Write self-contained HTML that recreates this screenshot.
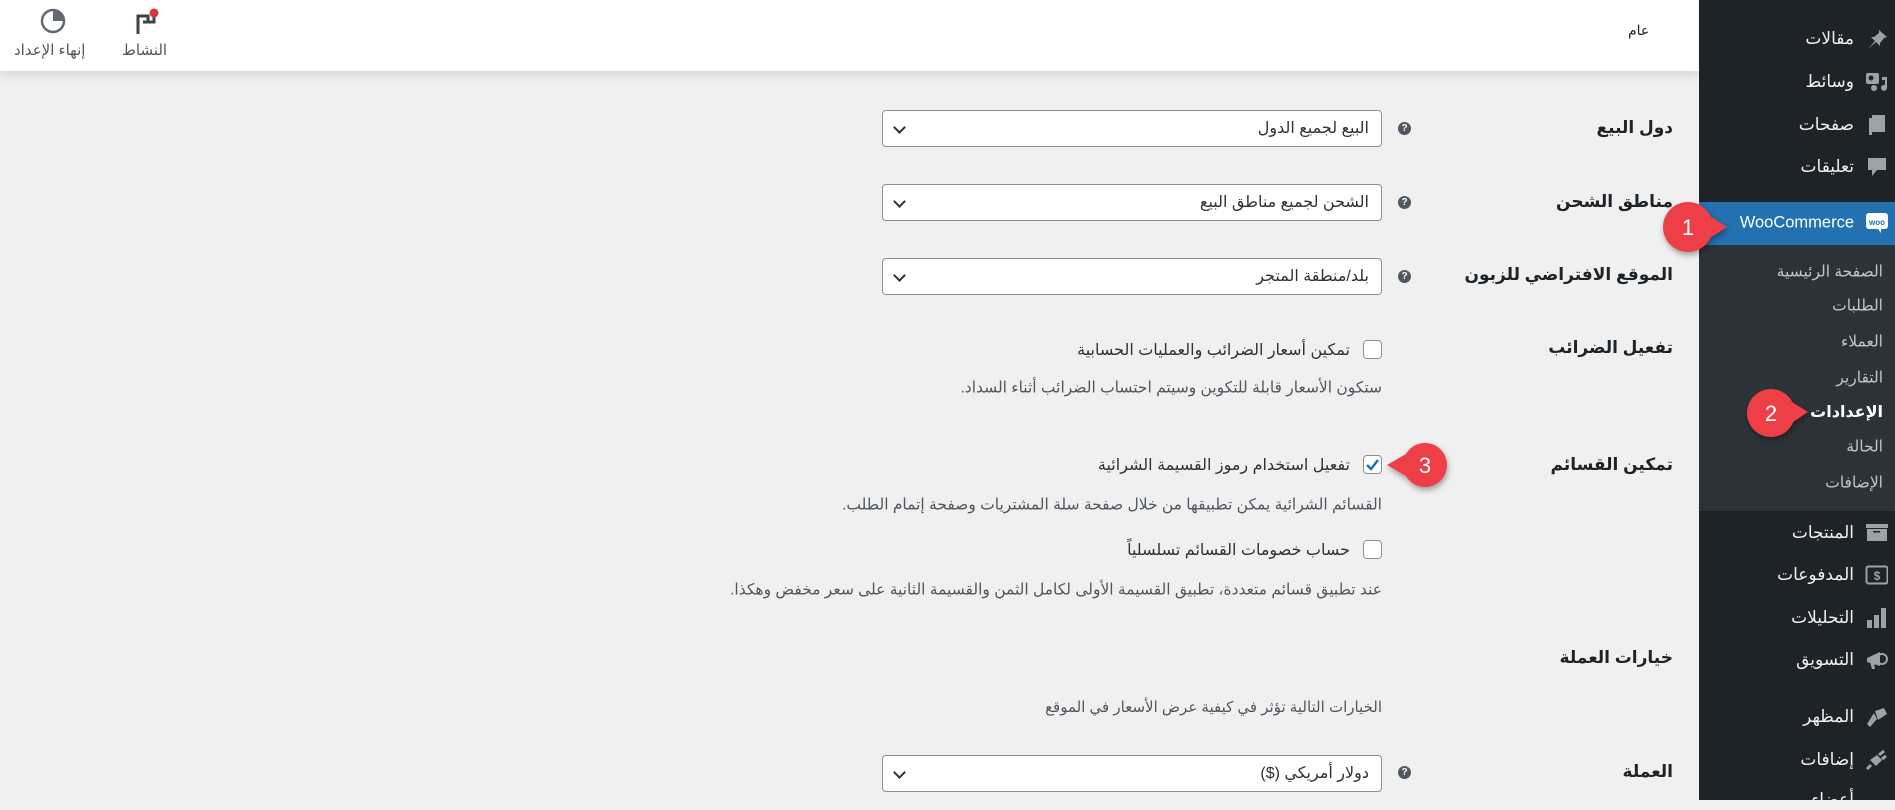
<!DOCTYPE html>
<html><head><meta charset="utf-8"><style>
*{margin:0;padding:0;box-sizing:border-box}
body{width:1895px;height:800px;overflow:hidden;background:#f0f0f1;font-family:"Liberation Sans","Noto Sans CJK SC","DejaVu Sans",sans-serif;position:relative;direction:rtl}
.a{position:absolute;white-space:nowrap}
#top{position:absolute;left:0;top:0;width:1699px;height:71px;background:#fff;box-shadow:0 4px 10px rgba(0,0,0,.12)}
#side{position:absolute;left:1699px;top:0;width:196px;height:800px;background:#1d2327}
#sub{position:absolute;left:1699px;top:245px;width:196px;height:266px;background:#2c3338}
#woo{position:absolute;left:1699px;top:202px;width:196px;height:43px;background:#2271b1}
.m{color:#f0f0f1;font-size:17px;right:41px;transform:translateY(-50%)}
.s{color:#c3c4c7;font-size:15.5px;right:12px;transform:translateY(-50%)}
.ic{position:absolute;left:1865px;width:23px;height:20px;transform:translateY(-50%)}
.lbl{right:222px;font-size:17px;font-weight:bold;color:#1d2327;transform:translateY(-50%)}
.sel{position:absolute;left:882px;width:500px;height:37px;background:#fff;border:1px solid #8c8f94;border-radius:4px;font-size:16px;color:#2c3338;padding-right:12px;line-height:35px}
.sel:after{content:"";position:absolute;left:12px;top:12px;width:7px;height:7px;border-right:2px solid #2c3338;border-bottom:2px solid #2c3338;transform:rotate(45deg)}
.help{position:absolute;left:1398px;width:13px;height:13px;border-radius:50%;background:#50575e;color:#fff;font-size:10px;text-align:center;line-height:13px;font-weight:bold;direction:ltr}
.cb{position:absolute;left:1363px;width:19px;height:19px;border:1px solid #8c8f94;border-radius:4px;background:#fff}
.t{font-size:16px;color:#2c3338;transform:translateY(-50%)}
.d{font-size:15.5px;color:#50575e;right:513px;transform:translateY(-50%)}
</style></head><body>
<div id="top"></div>
<div class="a" style="left:1628px;top:22px;font-size:14px;color:#1d2327">عام</div>
<svg class="a" style="left:135px;top:8px" width="26" height="28" viewBox="0 0 26 28"><path d="M3 26V8h10v6h-5" fill="none" stroke="#3c434a" stroke-width="3"/><path d="M13 8v6h6V6" fill="none" stroke="#3c434a" stroke-width="3"/><circle cx="19" cy="5" r="4.5" fill="#d63638"/></svg>
<div class="a" style="left:122px;top:41px;font-size:15px;color:#50575e">النشاط</div>
<svg class="a" style="left:40px;top:8px" width="26" height="26" viewBox="0 0 26 26"><circle cx="13" cy="13" r="11" fill="none" stroke="#646970" stroke-width="2.5"/><path d="M13 3A10 10 0 0 1 23 13H13Z" fill="#646970"/></svg>
<div class="a" style="left:14px;top:41px;font-size:15px;color:#50575e">إنهاء الإعداد</div>

<div id="side"></div><div id="sub"></div><div id="woo"></div>
<div class="a m" style="top:39px">مقالات</div>
<div class="a m" style="top:82px">وسائط</div>
<div class="a m" style="top:125px">صفحات</div>
<div class="a m" style="top:167px">تعليقات</div>
<div class="a m" style="top:223px;color:#fff;font-size:16.5px">WooCommerce</div>
<svg class="ic" style="top:39px" viewBox="0 0 23 20"><path d="M14 1l8 7-3 1-4 5 0 3-4-4-8 7 7-8-4-4 3 0 5-4z" fill="#9ca2a7"/></svg>
<svg class="ic" style="top:82px" viewBox="0 0 23 20"><rect x="1" y="1" width="13" height="11" rx="2" fill="#9ca2a7"/><circle cx="6" cy="6" r="2.5" fill="#1d2327"/><path d="M17 5h5v11a3 3 0 1 1-2-3V8h-3z" fill="#9ca2a7"/><circle cx="9" cy="16" r="3" fill="#9ca2a7"/></svg>
<svg class="ic" style="top:125px" viewBox="0 0 23 20"><rect x="7" y="0" width="13" height="17" fill="#9ca2a7"/><rect x="4" y="3" width="3" height="17" fill="#9ca2a7"/></svg>
<svg class="ic" style="top:167px" viewBox="0 0 23 20"><path d="M3 1h18v12H12l-5 6v-6H3z" fill="#9ca2a7"/></svg>
<svg class="ic" style="top:223px;width:22px;height:22px;left:1866px" viewBox="0 0 22 22"><rect x="0" y="1" width="22" height="16" rx="3" fill="#fff"/><path d="M12 17l3 4v-4z" fill="#fff"/><text x="11" y="13" font-size="8" font-weight="bold" fill="#2271b1" text-anchor="middle" font-family="Liberation Sans">woo</text></svg>
<div class="a s" style="top:272px">الصفحة الرئيسية</div>
<div class="a s" style="top:306px">الطلبات</div>
<div class="a s" style="top:342px">العملاء</div>
<div class="a s" style="top:378px">التقارير</div>
<div class="a s" style="top:412px;color:#fff;font-weight:bold;font-size:16px">الإعدادات</div>
<div class="a s" style="top:447px">الحالة</div>
<div class="a s" style="top:483px">الإضافات</div>
<div class="a m" style="top:533px">المنتجات</div>
<div class="a m" style="top:575px">المدفوعات</div>
<div class="a m" style="top:618px">التحليلات</div>
<div class="a m" style="top:660px">التسويق</div>
<div class="a m" style="top:717px">المظهر</div>
<div class="a m" style="top:760px">إضافات</div>
<div class="a m" style="top:800px">أعضاء</div>
<svg class="ic" style="top:533px" viewBox="0 0 23 20"><rect x="1" y="1" width="22" height="4" fill="#9ca2a7"/><rect x="2" y="6" width="20" height="12" fill="#9ca2a7"/><rect x="8" y="8" width="7" height="1.5" fill="#1d2327"/></svg>
<svg class="ic" style="top:575px" viewBox="0 0 23 20"><rect x="1.5" y="1.5" width="21" height="17" rx="2" fill="none" stroke="#9ca2a7" stroke-width="2"/><text x="12" y="15" font-size="12" font-weight="bold" fill="#9ca2a7" text-anchor="middle" font-family="Liberation Sans">$</text></svg>
<svg class="ic" style="top:618px" viewBox="0 0 23 20"><rect x="2" y="12" width="5" height="8" fill="#9ca2a7"/><rect x="9" y="7" width="5" height="13" fill="#9ca2a7"/><rect x="16" y="0" width="5" height="20" fill="#9ca2a7"/></svg>
<svg class="ic" style="top:660px" viewBox="0 0 23 20"><path d="M2 8l13-6v14L2 12z" fill="#9ca2a7"/><circle cx="17" cy="9" r="5" fill="none" stroke="#9ca2a7" stroke-width="2"/><path d="M5 12l2 7h3l-1-6z" fill="#9ca2a7"/></svg>
<svg class="ic" style="top:717px" viewBox="0 0 23 20"><path d="M10 4l9-3 3 6-9 6z" fill="#9ca2a7"/><path d="M9 6l3 6-7 8-3-3z" fill="#9ca2a7"/></svg>
<svg class="ic" style="top:760px" viewBox="0 0 23 20"><path d="M5 10l7-5 5 5-6 6z" fill="#9ca2a7"/><path d="M14 5l5-4M17 9l4-3M6 15l-4 4" stroke="#9ca2a7" stroke-width="3"/></svg>

<div class="a lbl" style="top:128px">دول البيع</div>
<div class="a lbl" style="top:202px">مناطق الشحن</div>
<div class="a lbl" style="top:275px">الموقع الافتراضي للزبون</div>
<div class="a lbl" style="top:348px">تفعيل الضرائب</div>
<div class="a lbl" style="top:465px">تمكين القسائم</div>
<div class="a lbl" style="top:658px">خيارات العملة</div>
<div class="a lbl" style="top:772px">العملة</div>

<div class="help" style="top:122px">?</div><div class="sel" style="top:110px">البيع لجميع الدول</div>
<div class="help" style="top:196px">?</div><div class="sel" style="top:184px">الشحن لجميع مناطق البيع</div>
<div class="help" style="top:270px">?</div><div class="sel" style="top:258px">بلد/منطقة المتجر</div>
<div class="help" style="top:766px">?</div><div class="sel" style="top:755px">دولار أمريكي ($)</div>

<div class="cb" style="top:340px"></div>
<div class="a t" style="right:545px;top:350px">تمكين أسعار الضرائب والعمليات الحسابية</div>
<div class="a d" style="top:388px">ستكون الأسعار قابلة للتكوين وسيتم احتساب الضرائب أثناء السداد.</div>
<div class="cb" style="top:455px"><svg width="17" height="17" viewBox="0 0 17 17" style="position:absolute;left:0;top:0"><path d="M3 9l4 4 7-9" fill="none" stroke="#2271b1" stroke-width="2.5"/></svg></div>
<div class="a t" style="right:545px;top:465px">تفعيل استخدام رموز القسيمة الشرائية</div>
<div class="a d" style="top:505px">القسائم الشرائية يمكن تطبيقها من خلال صفحة سلة المشتريات وصفحة إتمام الطلب.</div>
<div class="cb" style="top:540px"></div>
<div class="a t" style="right:545px;top:550px">حساب خصومات القسائم تسلسلياً</div>
<div class="a d" style="top:590px">عند تطبيق قسائم متعددة، تطبيق القسيمة الأولى لكامل الثمن والقسيمة الثانية على سعر مخفض وهكذا.</div>
<div class="a d" style="top:707px;font-size:15px">الخيارات التالية تؤثر في كيفية عرض الأسعار في الموقع</div>

<svg class="a" style="left:1655px;top:196px;overflow:visible" width="80" height="62"><g style="filter:drop-shadow(1px 3px 3px rgba(0,0,0,.35))"><path d="M33 6L72 31 33 56Z" fill="#ef3f46"/><circle cx="33" cy="31" r="25" fill="#ef3f46"/></g><text x="33" y="39" font-size="22" fill="#fff" text-anchor="middle" font-family="Liberation Sans">1</text></svg>
<svg class="a" style="left:1738px;top:383px;overflow:visible" width="80" height="62"><g style="filter:drop-shadow(1px 3px 3px rgba(0,0,0,.35))"><path d="M33 6L70 29 33 54Z" fill="#ef3f46"/><circle cx="33" cy="30" r="24" fill="#ef3f46"/></g><text x="33" y="38" font-size="22" fill="#fff" text-anchor="middle" font-family="Liberation Sans">2</text></svg>
<svg class="a" style="left:1383px;top:440px;overflow:visible" width="80" height="52"><g style="filter:drop-shadow(1px 3px 3px rgba(0,0,0,.35))"><path d="M42 3L4 25 42 47Z" fill="#ef3f46"/><circle cx="42" cy="25" r="22" fill="#ef3f46"/></g><text x="42" y="33" font-size="22" fill="#fff" text-anchor="middle" font-family="Liberation Sans">3</text></svg>
</body></html>
